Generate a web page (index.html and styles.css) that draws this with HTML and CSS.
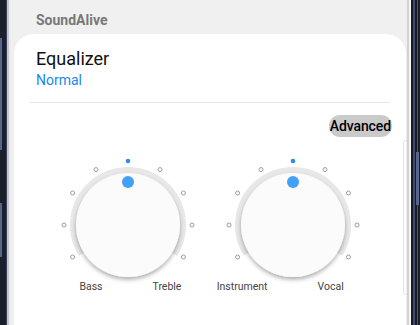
FILE: index.html
```html
<!DOCTYPE html>
<html>
<head>
    <meta charset="UTF-8">
    <title>SoundAlive</title>
    <link rel="stylesheet" href="styles.css">
</head>
<body>
<svg class="defs" width="0" height="0">
    <defs>
        <filter id="knobShadow" x="-20%" y="-20%" width="140%" height="150%">
            <feDropShadow dx="0" dy="2.5" stdDeviation="2" flood-color="#000" flood-opacity="0.32"/>
        </filter>
    </defs>
</svg>
<div class="phone">
    <div class="bezel-left">
        <span class="side-btn btn-a"></span>
        <span class="side-btn btn-b"></span>
    </div>
    <div class="screen">
        <div class="title">SoundAlive</div>
        <div class="card">
            <div class="eq-name">Equalizer</div>
            <div class="eq-mode">Normal</div>
            <div class="divider"></div>
            <div class="tools">
                <span class="advanced">Advanced</span>
            </div>
            <div class="knobs">
                <div class="knob">
                    <svg width="140" height="126" viewBox="0 0 140 126">
                        <path class="track" d="M23.78 95.88 A54.5 54.5 0 1 1 116.22 95.88"/>
                        <circle class="tick" cx="14.57" cy="99" r="2"/>
                        <circle class="tick" cx="6" cy="67" r="2"/>
                        <circle class="tick" cx="14.57" cy="35" r="2"/>
                        <circle class="tick" cx="38" cy="11.57" r="2"/>
                        <circle class="tick on" cx="70" cy="3" r="2.3"/>
                        <circle class="tick" cx="102" cy="11.57" r="2"/>
                        <circle class="tick" cx="125.43" cy="35" r="2"/>
                        <circle class="tick" cx="134" cy="67" r="2"/>
                        <circle class="tick" cx="125.43" cy="99" r="2"/>
                        <circle class="face" cx="70" cy="67" r="52" filter="url(#knobShadow)"/>
                        <circle class="handle" cx="70" cy="24" r="6"/>
                    </svg>
                    <div class="labels">
                        <span>Bass</span>
                        <span>Treble</span>
                    </div>
                </div>
                <div class="knob">
                    <svg width="140" height="126" viewBox="0 0 140 126">
                        <path class="track" d="M23.78 95.88 A54.5 54.5 0 1 1 116.22 95.88"/>
                        <circle class="tick" cx="14.57" cy="99" r="2"/>
                        <circle class="tick" cx="6" cy="67" r="2"/>
                        <circle class="tick" cx="14.57" cy="35" r="2"/>
                        <circle class="tick" cx="38" cy="11.57" r="2"/>
                        <circle class="tick on" cx="70" cy="3" r="2.3"/>
                        <circle class="tick" cx="102" cy="11.57" r="2"/>
                        <circle class="tick" cx="125.43" cy="35" r="2"/>
                        <circle class="tick" cx="134" cy="67" r="2"/>
                        <circle class="tick" cx="125.43" cy="99" r="2"/>
                        <circle class="face" cx="70" cy="67" r="52" filter="url(#knobShadow)"/>
                        <circle class="handle" cx="70" cy="24" r="6"/>
                    </svg>
                    <div class="labels">
                        <span>Instrument</span>
                        <span>Vocal</span>
                    </div>
                </div>
            </div>
        </div>
        <span class="scroll-hint"></span>
    </div>
    <div class="bezel-right">
        <span class="side-btn btn-c"></span>
    </div>
</div>
</body>
</html>
```

FILE: styles.css
```css
/* reset */
* {
    margin: 0;
    padding: 0;
    box-sizing: border-box;
}
body {
    width: 420px;
    height: 325px;
    overflow: hidden;
    background: #fff;
    font-family: Roboto, "Noto Sans", sans-serif;
}
.defs {
    position: absolute;
}
.phone {
    display: flex;
    height: 325px;
}
.bezel-left {
    position: relative;
    width: 11px;
    background: linear-gradient(to right, #1b1f2b 0 6px, #34405e 6px 7px, #c5c6cb 7px 9px, #ececec 9px 11px);
}
.bezel-right {
    position: relative;
    width: 13px;
    background: linear-gradient(to right, #d2d2d2 0 2px, #f6f6f6 2px 4px, #171b26 4px 6px, #3f4c70 6px 8px, #171b26 8px 10px, #4a5777 10px 11px, #1b1f2b 11px 13px);
}
.side-btn {
    position: absolute;
    width: 2px;
    background: #55658c;
}
.btn-a {
    left: 0;
    top: 38px;
    height: 112px;
}
.btn-b {
    left: 0;
    top: 203px;
    height: 54px;
}
.btn-c {
    right: 1px;
    top: 152px;
    height: 53px;
    width: 3px;
}
.screen {
    position: relative;
    flex: 1;
    display: flex;
    flex-direction: column;
    background: #f0f0f0;
    overflow: hidden;
}
.title {
    height: 34px;
    padding: 10px 0 0 25px;
    font-size: 14px;
    line-height: 20px;
    font-weight: 700;
    color: #787878;
}
.card {
    flex: 1;
    margin: 0 1px 0 3px;
    padding-top: 14px;
    background: #fff;
    border-radius: 20px 20px 0 0;
}
.eq-name {
    padding-left: 22px;
    font-size: 18px;
    line-height: 22px;
    color: #111;
}
.eq-mode {
    margin-top: 1px;
    padding-left: 22px;
    font-size: 14px;
    line-height: 18px;
    color: #1a87f0;
}
.divider {
    height: 1px;
    margin: 13px 16px 0 16px;
    background: #e8e8e8;
}
.tools {
    display: flex;
    justify-content: flex-end;
    margin-top: 12px;
    padding-right: 14px;
}
.advanced {
    height: 22px;
    padding: 0 1px;
    border-radius: 11px;
    background: #cacaca;
    font-size: 14px;
    line-height: 22px;
    font-weight: 500;
    letter-spacing: -0.1px;
    color: #000;
}
.knobs {
    display: grid;
    grid-template-columns: 165px 165px;
    margin-top: 21px;
    padding-left: 31px;
}
.knob {
    display: flex;
    flex-direction: column;
    align-items: center;
}
.knob svg {
    display: block;
}
.track {
    fill: none;
    stroke: #e8e8e8;
    stroke-width: 7;
}
.tick {
    fill: #fff;
    stroke: #9c9c9c;
    stroke-width: 1;
}
.tick.on {
    fill: #2b8ef0;
    stroke: none;
}
.face {
    fill: #fbfbfb;
}
.handle {
    fill: #42a0f6;
}
.labels {
    display: grid;
    grid-template-columns: 1fr 1fr;
    column-gap: 50px;
    width: 165px;
    margin-top: -3px;
    font-size: 10.5px;
    line-height: 12px;
    color: #444;
}
.labels span:first-child {
    text-align: right;
}
.scroll-hint {
    position: absolute;
    right: -1px;
    top: 140px;
    width: 5px;
    height: 155px;
    border: 1px solid #e2e2e2;
    border-radius: 4px;
}
```
